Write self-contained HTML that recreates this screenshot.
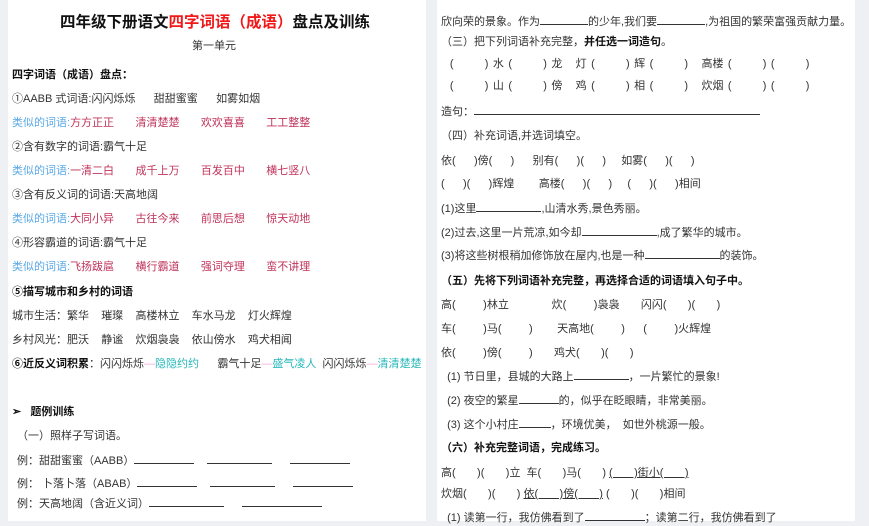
<!DOCTYPE html>
<html><head><meta charset="utf-8"><style>
*{margin:0;padding:0;box-sizing:border-box}
body{width:869px;height:521px;overflow:hidden;background:#eef0f3;font-family:"Liberation Sans","Noto Sans CJK SC",sans-serif;font-size:11px;color:#333;position:relative}
.pg{position:absolute;top:0;height:521px;background:#fff}
.l{position:absolute;white-space:pre;line-height:16px}
b{font-weight:bold;color:#111}
.bl{color:#5aa8e6}.rd{color:#c0335a}.cy{color:#27b7b9}.pk{color:#f3a5d9}
.u{display:inline-block;border-bottom:1px solid #333;height:11px;vertical-align:baseline}
.w{word-spacing:1.4px}
</style></head><body>
<div class="pg" style="left:8px;width:418px"></div>
<div class="pg" style="left:437px;width:418px"></div>

<div class="l" style="left:60px;top:13px;font-size:15.5px;line-height:20px;font-weight:bold;color:#111">四年级下册语文<span style="color:#f01818">四字词语（成语）</span>盘点及训练</div>
<div class="l" style="left:192px;top:38px">第一单元</div>
<div class="l" style="left:12px;top:67px"><b>四字词语（成语）盘点：</b></div>
<div class="l" style="left:12px;top:91px">①AABB 式词语:闪闪烁烁      甜甜蜜蜜      如雾如烟</div>
<div class="l" style="left:12px;top:115px"><span class="bl">类似的词语:</span><span class="rd">方方正正       清清楚楚       欢欢喜喜       工工整整</span></div>
<div class="l" style="left:12px;top:139px">②含有数字的词语:霸气十足</div>
<div class="l" style="left:12px;top:163px"><span class="bl">类似的词语:</span><span class="rd">一清二白       成千上万       百发百中       横七竖八</span></div>
<div class="l" style="left:12px;top:187px">③含有反义词的词语:天高地阔</div>
<div class="l" style="left:12px;top:211px"><span class="bl">类似的词语:</span><span class="rd">大同小异       古往今来       前思后想       惊天动地</span></div>
<div class="l" style="left:12px;top:235px">④形容霸道的词语:霸气十足</div>
<div class="l" style="left:12px;top:259px"><span class="bl">类似的词语:</span><span class="rd">飞扬跋扈       横行霸道       强词夺理       蛮不讲理</span></div>
<div class="l" style="left:12px;top:284px"><b>⑤描写城市和乡村的词语</b></div>
<div class="l" style="left:12px;top:308px">城市生活：繁华    璀璨    高楼林立    车水马龙    灯火辉煌</div>
<div class="l" style="left:12px;top:332px">乡村风光：肥沃    静谧    炊烟袅袅    依山傍水    鸡犬相闻</div>
<div class="l" style="left:12px;top:356px"><b>⑥近反义词积累</b>：闪闪烁烁<span class="pk">—</span><span class="cy">隐隐约约</span>      霸气十足<span class="pk">—</span><span class="cy">盛气凌人</span>  闪闪烁烁<span class="pk">—</span><span class="cy">清清楚楚</span></div>
<div class="l" style="left:12px;top:404px"><b>➢   题例训练</b></div>
<div class="l" style="left:17px;top:428px">（一）照样子写词语。</div>
<div class="l" style="left:17px;top:453px">例：甜甜蜜蜜（AABB）<span class="u" style="width:60px"></span>    <span class="u" style="width:65px"></span>      <span class="u" style="width:60px"></span></div>
<div class="l" style="left:17px;top:476px">例： 卜落卜落（ABAB）<span class="u" style="width:60px"></span>    <span class="u" style="width:65px"></span>      <span class="u" style="width:60px"></span></div>
<div class="l" style="left:17px;top:496px">例：天高地阔（含近义词）<span class="u" style="width:75px"></span>      <span class="u" style="width:80px"></span></div>

<div class="l" style="left:441px;top:14px">欣向荣的景象。作为<span class="u" style="width:48px"></span>的少年,我们要<span class="u" style="width:48px"></span>,为祖国的繁荣富强贡献力量。</div>
<div class="l" style="left:441px;top:34px">（三）把下列词语补充完整，<b>并任选一词造句</b>。</div>
<div class="l w" style="left:441px;top:56px">  (       ) 水 (       ) 龙   灯 (       ) 辉 (       )   高楼 (       ) (       )</div>
<div class="l w" style="left:441px;top:78px">  (       ) 山 (       ) 傍   鸡 (       ) 相 (       )   炊烟 (       ) (       )</div>
<div class="l" style="left:441px;top:104px">造句：<span class="u" style="width:286px"></span></div>
<div class="l" style="left:441px;top:128px">（四）补充词语,并选词填空。</div>
<div class="l" style="left:441px;top:153px">依(      )傍(      )      别有(      )(      )     如雾(      )(      )</div>
<div class="l" style="left:441px;top:176px">(      )(      )辉煌        高楼(      )(      )     (      )(      )相间</div>
<div class="l" style="left:441px;top:201px">(1)这里<span class="u" style="width:65px"></span>,山清水秀,景色秀丽。</div>
<div class="l" style="left:441px;top:225px">(2)过去,这里一片荒凉,如今却<span class="u" style="width:75px"></span>,成了繁华的城市。</div>
<div class="l" style="left:441px;top:248px">(3)将这些树根稍加修饰放在屋内,也是一种<span class="u" style="width:75px"></span>的装饰。</div>
<div class="l" style="left:441px;top:273px"><b>（五）先将下列词语补充完整，再选择合适的词语填入句子中。</b></div>
<div class="l" style="left:441px;top:297px">高(         )林立              炊(         )袅袅       闪闪(       )(       )</div>
<div class="l" style="left:441px;top:321px">车(         )马(         )        天高地(         )      (         )火辉煌</div>
<div class="l" style="left:441px;top:345px">依(         )傍(         )       鸡犬(       )(       )</div>
<div class="l" style="left:441px;top:369px">  (1) 节日里，县城的大路上<span class="u" style="width:55px"></span>，一片繁忙的景象!</div>
<div class="l" style="left:441px;top:393px">  (2) 夜空的繁星<span class="u" style="width:40px"></span>的，似乎在眨眼睛，非常美丽。</div>
<div class="l" style="left:441px;top:417px">  (3) 这个小村庄<span class="u" style="width:32px"></span>，环境优美，  如世外桃源一般。</div>
<div class="l" style="left:441px;top:440px"><b>（六）补充完整词语，完成练习。</b></div>
<div class="l" style="left:441px;top:465px">高(       )(       )立  车(       )马(       ) <span style="text-decoration:underline">(       )街小(       )</span></div>
<div class="l" style="left:441px;top:486px">炊烟(       )(       ) <span style="text-decoration:underline">依(       )傍(       )</span> (       )(       )相间</div>
<div class="l" style="left:441px;top:510px">  (1) 读第一行，我仿佛看到了<span class="u" style="width:60px"></span>；读第二行，我仿佛看到了</div>
</body></html>
